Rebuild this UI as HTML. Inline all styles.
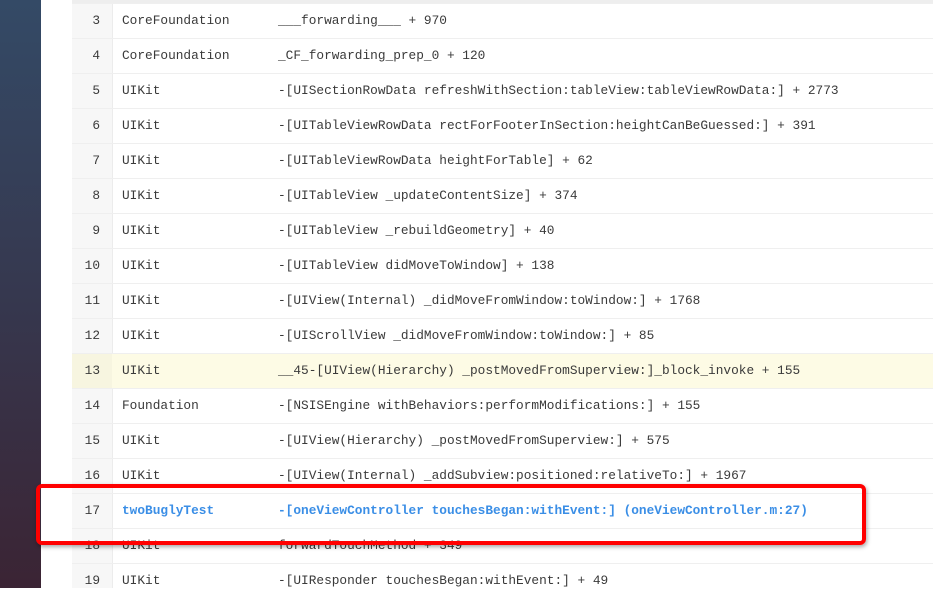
<!DOCTYPE html>
<html><head><style>
body{margin:0;width:933px;height:588px;overflow:hidden;background:#fff;position:relative;font-family:"Liberation Mono",monospace;font-size:12.8px;color:#3a3a3a}
.side{position:absolute;left:0;top:0;width:41px;height:588px;background:linear-gradient(#344a66,#36384f 50%,#3b2434)}
.numcol{position:absolute;left:72px;top:0;width:40px;height:588px;background:#f7f7f7;border-right:1px solid #ececec}
.row{position:absolute;left:72px;right:0;height:35px;border-top:1px solid #efefef;box-sizing:border-box}
.row span{position:absolute;top:0;line-height:34px;white-space:pre}
.n{left:0;width:28px;text-align:right}
.a{left:50px}.b{left:206px}
.hl{background:#fdfbe5}
.hl .n{background:#f7f5e0;width:40px;padding-right:12px;box-sizing:border-box}
.blue{color:#3a8ee6;font-weight:bold}
.box{position:absolute;left:36px;top:484px;width:822px;height:53px;border:4px solid #f00;border-radius:6px;box-shadow:1px 2px 4px rgba(0,0,0,.35)}
</style></head><body>
<div class="side"></div>
<div class="numcol"></div>
<div style="position:absolute;left:72px;right:0;top:0;height:3px;background:#eee"></div>
<div class="row" style="top:3px"><span class="n">3</span><span class="a">CoreFoundation</span><span class="b">___forwarding___ + 970</span></div>
<div class="row" style="top:38px"><span class="n">4</span><span class="a">CoreFoundation</span><span class="b">_CF_forwarding_prep_0 + 120</span></div>
<div class="row" style="top:73px"><span class="n">5</span><span class="a">UIKit</span><span class="b">-[UISectionRowData refreshWithSection:tableView:tableViewRowData:] + 2773</span></div>
<div class="row" style="top:108px"><span class="n">6</span><span class="a">UIKit</span><span class="b">-[UITableViewRowData rectForFooterInSection:heightCanBeGuessed:] + 391</span></div>
<div class="row" style="top:143px"><span class="n">7</span><span class="a">UIKit</span><span class="b">-[UITableViewRowData heightForTable] + 62</span></div>
<div class="row" style="top:178px"><span class="n">8</span><span class="a">UIKit</span><span class="b">-[UITableView _updateContentSize] + 374</span></div>
<div class="row" style="top:213px"><span class="n">9</span><span class="a">UIKit</span><span class="b">-[UITableView _rebuildGeometry] + 40</span></div>
<div class="row" style="top:248px"><span class="n">10</span><span class="a">UIKit</span><span class="b">-[UITableView didMoveToWindow] + 138</span></div>
<div class="row" style="top:283px"><span class="n">11</span><span class="a">UIKit</span><span class="b">-[UIView(Internal) _didMoveFromWindow:toWindow:] + 1768</span></div>
<div class="row" style="top:318px"><span class="n">12</span><span class="a">UIKit</span><span class="b">-[UIScrollView _didMoveFromWindow:toWindow:] + 85</span></div>
<div class="row hl" style="top:353px"><span class="n">13</span><span class="a">UIKit</span><span class="b">__45-[UIView(Hierarchy) _postMovedFromSuperview:]_block_invoke + 155</span></div>
<div class="row" style="top:388px"><span class="n">14</span><span class="a">Foundation</span><span class="b">-[NSISEngine withBehaviors:performModifications:] + 155</span></div>
<div class="row" style="top:423px"><span class="n">15</span><span class="a">UIKit</span><span class="b">-[UIView(Hierarchy) _postMovedFromSuperview:] + 575</span></div>
<div class="row" style="top:458px"><span class="n">16</span><span class="a">UIKit</span><span class="b">-[UIView(Internal) _addSubview:positioned:relativeTo:] + 1967</span></div>
<div class="row" style="top:493px"><span class="n">17</span><span class="a blue">twoBuglyTest</span><span class="b blue">-[oneViewController touchesBegan:withEvent:] (oneViewController.m:27)</span></div>
<div class="row" style="top:528px"><span class="n">18</span><span class="a">UIKit</span><span class="b">forwardTouchMethod + 349</span></div>
<div class="row" style="top:563px"><span class="n">19</span><span class="a">UIKit</span><span class="b">-[UIResponder touchesBegan:withEvent:] + 49</span></div>
<div class="box"></div>
</body></html>
